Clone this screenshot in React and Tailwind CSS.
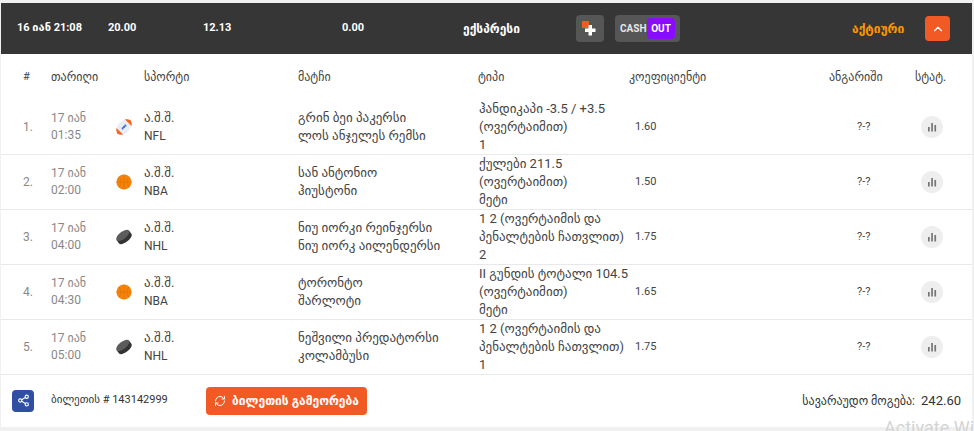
import React from "react";
import { ChevronUp, RefreshCw, Share2 } from "lucide-react";

const rows = [
  { n: "1.", time: "01:35", sport: "football", league: "NFL", home: "გრინ ბეი პაკერსი", away: "ლოს ანჯელეს რემსი", type: ["ჰანდიკაპი -3.5 / +3.5", "(ოვერტაიმით)", "1"], odd: "1.60" },
  { n: "2.", time: "02:00", sport: "basketball", league: "NBA", home: "სან ანტონიო", away: "ჰიუსტონი", type: ["ქულები 211.5", "(ოვერტაიმით)", "მეტი"], odd: "1.50" },
  { n: "3.", time: "04:00", sport: "puck", league: "NHL", home: "ნიუ იორკი რეინჯერსი", away: "ნიუ იორკ აილენდერსი", type: ["1 2 (ოვერტაიმის და", "პენალტების ჩათვლით)", "2"], odd: "1.75" },
  { n: "4.", time: "04:30", sport: "basketball", league: "NBA", home: "ტორონტო", away: "შარლოტი", type: ["II გუნდის ტოტალი 104.5", "(ოვერტაიმით)", "მეტი"], odd: "1.65" },
  { n: "5.", time: "05:00", sport: "puck", league: "NHL", home: "ნეშვილი პრედატორსი", away: "კოლამბუსი", type: ["1 2 (ოვერტაიმის და", "პენალტების ჩათვლით)", "1"], odd: "1.75" },
];

const cols = "grid grid-cols-[50px_65px_28px_154px_180px_151px_200px_86px_57px]";

function SportIcon({ sport }) {
  if (sport === "football") {
    return (
      <svg width="16" height="16" viewBox="0 0 16 16">
        <g transform="rotate(-45 8 8)">
          <ellipse cx="8" cy="8" rx="9.5" ry="6" fill="#e8eef8" />
          <path d="M-1.5 8 C0 5 .8 4 2 3.4 L2 12.6 C.8 12 0 11 -1.5 8Z" fill="#f4661b" />
          <path d="M17.5 8 C16 5 15.2 4 14 3.4 L14 12.6 C15.2 12 16 11 17.5 8Z" fill="#f4661b" />
          <path d="M5 8 H11 M6 6.8 V9.2 M8 6.8 V9.2 M10 6.8 V9.2" stroke="#3f6fd0" strokeWidth="1.1" />
        </g>
      </svg>
    );
  }
  if (sport === "basketball") {
    return (
      <svg width="16" height="16" viewBox="0 0 16 16">
        <circle cx="8" cy="8" r="7.6" fill="#f58209" />
        <path d="M8 .5 V15.5 M.5 8 H15.5 M2.8 2.8 C5.5 5 5.5 11 2.8 13.2 M13.2 2.8 C10.5 5 10.5 11 13.2 13.2" stroke="#d96f04" strokeWidth=".5" fill="none" />
      </svg>
    );
  }
  return (
    <svg width="16" height="16" viewBox="0 0 16 16">
      <g transform="rotate(-38 8 8)">
        <path d="M.2 6 V10 C.2 12 3.6 13.4 8 13.4 C12.4 13.4 15.8 12 15.8 10 V6Z" fill="#333333" />
        <ellipse cx="8" cy="6" rx="7.8" ry="3.6" fill="#5c5c5c" />
      </g>
    </svg>
  );
}

function BarsIcon() {
  return (
    <svg width="10" height="10" viewBox="0 0 10 10" fill="#757575">
      <rect x="1" y="5" width="1.7" height="4.5" />
      <rect x="4.2" y="1" width="1.7" height="8.5" />
      <rect x="7.4" y="3" width="1.7" height="6.5" />
    </svg>
  );
}

export default function App() {
  return (
    <div className="w-[974px] h-[431px] overflow-hidden relative bg-[#f0f0f0] pt-[3px] pl-px font-['Roboto','DejaVu_Sans',sans-serif]">
      <div className="w-[971px] h-[424px] bg-white">
        <div className="h-[51px] bg-[#363636] flex items-center text-white text-[11px] font-bold">
          <div className="w-[107px] pl-4">16 იან 21:08</div>
          <div className="w-[95px]">20.00</div>
          <div className="w-[139px]">12.13</div>
          <div className="w-[121px]">0.00</div>
          <div className="w-[113px] text-[12px]">ექსპრესი</div>
          <div className="w-[28px] h-[27px] rounded bg-[#565656] flex items-center justify-center">
            <svg width="16" height="16" viewBox="0 0 16 16">
              <rect x="0" y="0" width="7" height="7" fill="#f15a24" />
              <path d="M6.5 4 H10 V7.5 H13.5 V11 H10 V14.5 H6.5 V11 H3 V7.5 H6.5Z" fill="#ffffff" />
            </svg>
          </div>
          <div className="ml-[11px] w-[65px] h-[27px] rounded bg-[#565656] flex items-center pl-[5px] text-[10px] font-bold">
            <span className="w-[27px] text-[#e6e6e6]">CASH</span>
            <span className="w-[28px] h-[21px] rounded bg-[#8a0cff] flex items-center justify-center">OUT</span>
          </div>
          <div className="ml-[172px] w-[73px] text-[12px] text-[#ff9800]">აქტიური</div>
          <div className="w-[25px] h-[25px] rounded bg-[#f15a24] flex items-center justify-center">
            <ChevronUp size={14} />
          </div>
        </div>

        <div className={`${cols} h-[46px] items-center text-[12px] text-[#444444]`}>
          <div className="pl-[22px] text-[11px]">#</div>
          <div>თარიღი</div>
          <div />
          <div>სპორტი</div>
          <div>მატჩი</div>
          <div>ტიპი</div>
          <div>კოეფიციენტი</div>
          <div>ანგარიში</div>
          <div>სტატ.</div>
        </div>

        {rows.map((row) => (
          <div key={row.n} className={`${cols} h-[55px] items-center border-b border-[#e9e9e9] text-[13px] leading-[18px] text-[#444444]`}>
            <div className="pl-[22px] text-[12px] text-[#888888]">{row.n}</div>
            <div className="text-[#888888] text-[12px] leading-[17px]">
              <div>17 იან</div>
              <div>{row.time}</div>
            </div>
            <div>
              <SportIcon sport={row.sport} />
            </div>
            <div>
              <div>ა.შ.შ.</div>
              <div className="text-[12px]">{row.league}</div>
            </div>
            <div>
              <div>{row.home}</div>
              <div>{row.away}</div>
            </div>
            <div className="pl-px whitespace-nowrap">
              {row.type.map((line, i) => (
                <div key={i}>{line}</div>
              ))}
            </div>
            <div className="pl-[6px] text-[11px]">{row.odd}</div>
            <div className="pl-[28px] text-[11px]">?-?</div>
            <div className="pl-[6px]">
              <div className="w-[22px] h-[22px] rounded-full bg-[#eeeeee] flex items-center justify-center">
                <BarsIcon />
              </div>
            </div>
          </div>
        ))}

        <div className="h-[51px] flex items-center text-[#333333]">
          <div className="ml-[11px] w-[22px] h-[22px] rounded bg-[#2f4fa2] flex items-center justify-center text-white">
            <Share2 size={13} />
          </div>
          <div className="ml-[17px] w-[155px] text-[11px]">ბილეთის # 143142999</div>
          <button className="w-[161px] h-[28px] rounded-sm bg-[#f15a24] text-white text-[12px] font-bold flex items-center justify-center gap-[6px]">
            <RefreshCw size={12} />
            ბილეთის გამეორება
          </button>
          <div className="ml-auto pr-[11px] flex items-center gap-[6px] text-[12px]">
            სავარაუდო მოგება:
            <span className="text-[13px]">242.60</span>
          </div>
        </div>
      </div>
      <div className="absolute left-[884px] top-[414px] text-[18px] text-[#d4d4d4] whitespace-nowrap">Activate Windows</div>
    </div>
  );
}
